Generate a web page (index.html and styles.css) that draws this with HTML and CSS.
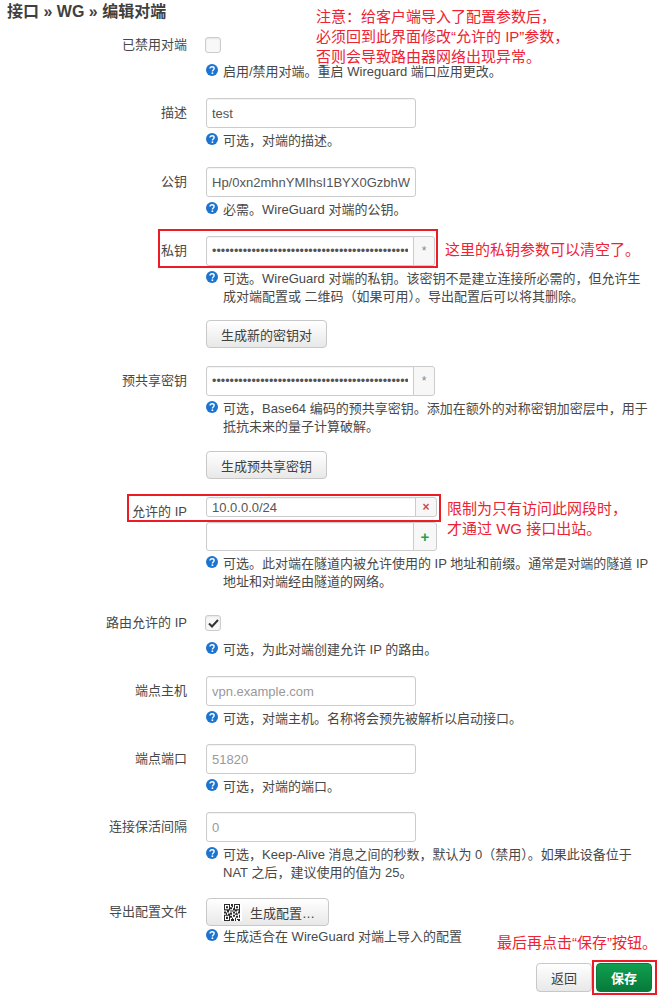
FILE: index.html
```html
<!DOCTYPE html>
<html lang="zh-CN">
<head>
  <meta charset="UTF-8" />
  <title>接口 » WG » 编辑对端</title>
  <link rel="stylesheet" href="styles.css">
</head>
<body>
  <svg class="defs" width="0" height="0">
    <symbol id="ajuda" viewBox="0 0 12 12">
      <circle cx="6" cy="6" r="6" fill="#1b74d0"/>
      <path d="M4 4.6c0-1.2.9-1.9 2.1-1.9s2 .7 2 1.7c0 1.6-1.7 1.5-1.7 3" fill="none" stroke="#fff" stroke-width="1.4"/>
      <rect x="5.6" y="8.4" width="1.6" height="1.6" fill="#fff"/>
    </symbol>
  </svg>

  <h2 class="titulo">接口 » WG » 编辑对端</h2>

  <div class="linha linha-check">
    <label class="rotulo">已禁用对端</label>
    <div class="campo">
      <span class="caixa"></span>
      <div class="ajuda"><svg class="ico"><use href="#ajuda"/></svg><span>启用/禁用对端。重启 Wireguard 端口应用更改。</span></div>
    </div>
  </div>

  <div class="linha">
    <label class="rotulo">描述</label>
    <div class="campo">
      <input class="entrada" type="text" value="test">
      <div class="ajuda"><svg class="ico"><use href="#ajuda"/></svg><span>可选，对端的描述。</span></div>
    </div>
  </div>

  <div class="linha">
    <label class="rotulo">公钥</label>
    <div class="campo">
      <input class="entrada" type="text" value="Hp/0xn2mhnYMIhsI1BYX0GzbhW+kQf3vTz8sLd2aPn0=">
      <div class="ajuda"><svg class="ico"><use href="#ajuda"/></svg><span>必需。WireGuard 对端的公钥。</span></div>
    </div>
  </div>

  <div class="linha linha-botao">
    <label class="rotulo">私钥</label>
    <div class="campo">
      <div class="grupo">
        <input class="entrada senha" type="password" value="aaaaaaaaaaaaaaaaaaaaaaaaaaaaaaaaaaaaaaaaaaaaaaaaaaaaaaaaaaaa">
        <span class="extra">*</span>
      </div>
      <div class="ajuda"><svg class="ico"><use href="#ajuda"/></svg><span>可选。WireGuard 对端的私钥。该密钥不是建立连接所必需的，但允许生成对端配置或 二维码（如果可用）。导出配置后可以将其删除。</span></div>
      <button class="botao">生成新的密钥对</button>
    </div>
  </div>

  <div class="linha linha-botao">
    <label class="rotulo">预共享密钥</label>
    <div class="campo">
      <div class="grupo">
        <input class="entrada senha" type="password" value="aaaaaaaaaaaaaaaaaaaaaaaaaaaaaaaaaaaaaaaaaaaaaaaaaaaaaaaaaaaa">
        <span class="extra">*</span>
      </div>
      <div class="ajuda"><svg class="ico"><use href="#ajuda"/></svg><span>可选，Base64 编码的预共享密钥。添加在额外的对称密钥加密层中，用于抵抗未来的量子计算破解。</span></div>
      <button class="botao botao-psk">生成预共享密钥</button>
    </div>
  </div>

  <div class="linha">
    <label class="rotulo rotulo-ip">允许的 IP</label>
    <div class="campo">
      <div class="grupo grupo-baixo">
        <input class="entrada" type="text" value="10.0.0.0/24">
        <span class="extra remover">×</span>
      </div>
      <div class="grupo grupo-largo">
        <input class="entrada" type="text">
        <span class="extra adicionar">+</span>
      </div>
      <div class="ajuda"><svg class="ico"><use href="#ajuda"/></svg><span>可选。此对端在隧道内被允许使用的 IP 地址和前缀。通常是对端的隧道 IP 地址和对端经由隧道的网络。</span></div>
    </div>
  </div>

  <div class="linha linha-check">
    <label class="rotulo">路由允许的 IP</label>
    <div class="campo">
      <span class="caixa marcada"><svg width="11" height="9" viewBox="0 0 11 9"><path d="M1 4.5l3 3 6-6.5" fill="none" stroke="#333" stroke-width="2"/></svg></span>
      <div class="ajuda"><svg class="ico"><use href="#ajuda"/></svg><span>可选，为此对端创建允许 IP 的路由。</span></div>
    </div>
  </div>

  <div class="linha linha-justa">
    <label class="rotulo">端点主机</label>
    <div class="campo">
      <input class="entrada" type="text" placeholder="vpn.example.com">
      <div class="ajuda"><svg class="ico"><use href="#ajuda"/></svg><span>可选，对端主机。名称将会预先被解析以启动接口。</span></div>
    </div>
  </div>

  <div class="linha linha-justa">
    <label class="rotulo">端点端口</label>
    <div class="campo">
      <input class="entrada" type="text" placeholder="51820">
      <div class="ajuda"><svg class="ico"><use href="#ajuda"/></svg><span>可选，对端的端口。</span></div>
    </div>
  </div>

  <div class="linha linha-justa">
    <label class="rotulo">连接保活间隔</label>
    <div class="campo">
      <input class="entrada" type="text" placeholder="0">
      <div class="ajuda"><svg class="ico"><use href="#ajuda"/></svg><span>可选，Keep-Alive 消息之间的秒数，默认为 0（禁用）。如果此设备位于 NAT 之后，建议使用的值为 25。</span></div>
    </div>
  </div>

  <div class="linha linha-fim">
    <label class="rotulo">导出配置文件</label>
    <div class="campo">
      <button class="botao botao-qr">
        <span class="qr-fundo">
          <svg width="16" height="17" viewBox="0 0 16 16" preserveAspectRatio="none"><path fill="#2a2a2a" fill-rule="evenodd" d="M0 0h6v6H0zM1 1v4h4V1zM2 2h2v2H2zM10 0h6v6h-6zM11 1v4h4V1zM12 2h2v2h-2zM0 10h6v6H0zM1 11v4h4v-4zM2 12h2v2H2zM7 0h2v2H7zM6 3h2v2H6zM8 2h1v1H8zM9 4h1v2H9zM0 7h2v2H0zM3 6h2v2H3zM2 8h1v2H2zM4 9h2v1H4zM6 6h3v1H6zM6 8h2v2H6zM9 7h2v2H9zM11 6h2v1h-2zM14 7h2v2h-2zM11 9h3v1h-3zM15 6h1v1h-1zM12 8h1v1h-1zM6 11h2v2H6zM9 10h2v2H9zM12 11h2v2h-2zM15 10h1v3h-1zM7 14h3v2H7zM11 13h1v3h-1zM13 14h3v1h-3zM14 15h2v1h-2zM8 13h1v1H8z"/></svg>
        </span>
        生成配置…
      </button>
      <div class="ajuda"><svg class="ico"><use href="#ajuda"/></svg><span>生成适合在 WireGuard 对端上导入的配置</span></div>
    </div>
  </div>

  <div class="acoes">
    <button class="botao">返回</button>
    <button class="botao salvar">保存</button>
  </div>

  <!-- marcas vermelhas por cima da tela -->
  <div class="nota nota-topo">注意：给客户端导入了配置参数后，<br>必须回到此界面修改“允许的 IP”参数，<br>否则会导致路由器网络出现异常。</div>
  <div class="nota nota-chave">这里的私钥参数可以清空了。</div>
  <div class="nota nota-ip">限制为只有访问此网段时，<br>才通过 WG 接口出站。</div>
  <div class="nota nota-salvar">最后再点击“保存”按钮。</div>
  <div class="moldura moldura-chave"></div>
  <div class="moldura moldura-ip"></div>
  <div class="moldura moldura-salvar"></div>
</body>
</html>
```

FILE: styles.css
```css
* {
  box-sizing: border-box;
}

html, body {
  height: 995px;
  overflow: hidden;
}

body {
  position: relative;
  margin: 0;
  padding: 0 8px 0 0;
  background-color: #fff;
  color: #484848;
  font-family: "Liberation Sans", "Noto Sans CJK SC", sans-serif;
  font-size: 13px;
}

.defs {
  position: absolute;
}

.titulo {
  margin: 0;
  padding: 2px 0 0 7px;
  height: 30px;
  font-size: 16px;
  line-height: 20px;
  font-weight: bold;
  color: #404040;
}

.linha {
  display: grid;
  grid-template-columns: 187px 1fr;
  column-gap: 19px;
  margin-bottom: 17px;
}

.linha-botao {
  margin-bottom: 18px;
}

.linha-justa {
  margin-bottom: 16px;
}

.rotulo {
  text-align: right;
  font-size: 13px;
  line-height: 30px;
}

.rotulo-ip {
  padding-top: 1px;
  line-height: 28px;
}

.linha-check .campo {
  padding-top: 7px;
}

.caixa {
  display: block;
  width: 16px;
  height: 16px;
  margin-left: -1px;
  border: 1px solid #ccc;
  border-radius: 3px;
  background: #f8f8f8;
  box-shadow: inset 0 1px 2px rgba(0, 0, 0, 0.08);
}

.marcada {
  display: flex;
  align-items: center;
  justify-content: center;
}

.linha-check .ajuda {
  margin-top: 10px;
}

.entrada {
  display: block;
  width: 210px;
  height: 30px;
  padding: 0 5px;
  border: 1px solid #ccc;
  border-radius: 3px;
  font-family: inherit;
  font-size: 13px;
  color: #555;
  outline: none;
  box-shadow: inset 0 1px 1px rgba(0, 0, 0, 0.05);
}

.entrada::placeholder {
  color: #999;
}

.senha {
  font-size: 12.5px;
}

.grupo {
  display: flex;
  width: 229px;
}

.grupo .entrada {
  flex: 1;
  width: auto;
  min-width: 0;
  border-radius: 3px 0 0 3px;
}

.grupo-baixo {
  width: 231px;
  height: 20px;
  margin-bottom: 5px;
}

.grupo-baixo .entrada {
  height: 20px;
}

.grupo-largo {
  width: 231px;
  height: 29px;
}

.grupo-largo .entrada {
  height: 29px;
}

.extra {
  flex: none;
  display: flex;
  align-items: center;
  justify-content: center;
  width: 22px;
  margin-left: -1px;
  border: 1px solid #ccc;
  border-radius: 0 3px 3px 0;
  background: #f7f7f7;
  color: #888;
  font-size: 12px;
}

.remover {
  color: #cf4a4a;
  font-weight: bold;
}

.adicionar {
  width: 24px;
  color: #1aa354;
  font-size: 15px;
  font-weight: bold;
}

.ajuda {
  display: flex;
  gap: 5px;
  margin-top: 4px;
  padding-right: 1px;
  font-size: 13px;
  line-height: 18px;
}

.ico {
  flex: none;
  width: 12px;
  height: 12px;
  margin-top: 1px;
}

.botao {
  display: inline-block;
  height: 28px;
  padding: 0 14px;
  border: 1px solid #c8c8c8;
  border-radius: 4px;
  background: linear-gradient(#fff, #e8e8e8);
  font-family: inherit;
  font-size: 13px;
  color: #404040;
}

.campo > .botao {
  display: block;
}

.ajuda + .botao {
  margin-top: 14px;
}

.ajuda + .botao-psk {
  margin-top: 15px;
}

.campo > .botao-qr {
  display: flex;
  align-items: center;
  width: 123px;
  padding: 0 0 0 15px;
}

.qr-fundo {
  display: flex;
  margin-right: 8px;
  padding: 0 2px;
  background: #fff;
}

.linha-fim {
  margin-bottom: 17px;
}

.linha-fim .ajuda {
  margin-top: 2px;
}

.linha-fim .rotulo {
  line-height: 28px;
}

.acoes {
  display: flex;
  justify-content: flex-end;
  gap: 4px;
}

.acoes .botao {
  width: 56px;
  height: 29px;
  padding: 0;
}

.acoes .salvar {
  border-color: #0a7a3d;
  background: linear-gradient(#0f9f50, #087a3a);
  color: #fff;
  font-weight: bold;
}

.nota {
  position: absolute;
  color: #ee2233;
  font-size: 15px;
  line-height: 20px;
  white-space: nowrap;
}

.nota-topo {
  left: 316px;
  top: 7px;
}

.nota-chave {
  left: 445px;
  top: 240px;
}

.nota-ip {
  left: 447px;
  top: 499px;
}

.nota-salvar {
  left: 497px;
  top: 933px;
}

.moldura {
  position: absolute;
  border: 2px solid #ed1c24;
}

.moldura-chave {
  left: 158px;
  top: 229px;
  width: 280px;
  height: 39px;
}

.moldura-ip {
  left: 127px;
  top: 494px;
  width: 314px;
  height: 28px;
}

.moldura-salvar {
  left: 592px;
  top: 960px;
  width: 65px;
  height: 35px;
}
```
